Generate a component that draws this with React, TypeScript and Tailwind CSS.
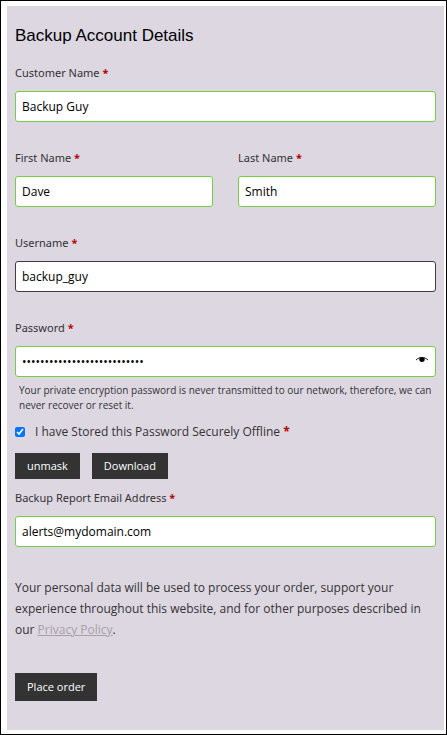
import { useState } from "react";
import type { ComponentProps } from "react";

type FieldProps = ComponentProps<"input"> & { id: string; label: string };

const Required = () => <span className="font-bold text-[#b30000]">*</span>;

function Field({ id, label, className = "border-[#75ce42]", children, ...props }: FieldProps) {
  return (
    <div className="min-w-0 flex-1">
      <label htmlFor={id} className="block font-['Noto_Sans',sans-serif] text-[11px] leading-4">
        {label} <Required />
      </label>
      <div className="relative mt-[10px]">
        <input
          id={id}
          className={`block h-[31px] w-full rounded-[3px] border bg-white px-[6px] text-[12px] text-black outline-none ${className}`}
          {...props}
        />
        {children}
      </div>
    </div>
  );
}

export default function App() {
  const [masked, setMasked] = useState(true);

  return (
    <div className="min-h-screen border border-black bg-white pt-[5px] pr-[2px] pb-[4px] pl-[6px] font-['Open_Sans',sans-serif] text-[#333333]">
      <form
        className="bg-[#ddd7e2] px-2 pt-[18px] pb-[29px]"
        onSubmit={(e) => e.preventDefault()}
      >
        <h3 className="font-['Liberation_Sans',Arial,sans-serif] text-[17px] leading-6 text-black">
          Backup Account Details
        </h3>

        {/* Account fields */}
        <div className="mt-[17px] flex flex-col gap-[28px]">
          <Field id="customer" label="Customer Name" defaultValue="Backup Guy" />
          <div className="flex gap-[25px]">
            <Field id="first" label="First Name" defaultValue="Dave" />
            <Field id="last" label="Last Name" defaultValue="Smith" />
          </div>
          <Field
            id="username"
            label="Username"
            defaultValue="backup_guy"
            className="border-[#4a363b]"
          />
          <Field
            id="password"
            label="Password"
            type={masked ? "password" : "text"}
            defaultValue="correct-horse-battery-stapl"
          >
            <button
              type="button"
              aria-label="Show password"
              className="absolute top-2 right-2 text-black"
              onClick={() => setMasked(!masked)}
            >
              <svg viewBox="0 0 12 12" className="block h-3 w-3">
                <path d="M0 6C2 4.1 4 3.5 6 3.5s4 .6 6 2.5" fill="none" stroke="currentColor" strokeWidth="0.9" />
                <ellipse cx="6" cy="5.6" rx="2.7" ry="2.4" fill="currentColor" />
              </svg>
            </button>
          </Field>
        </div>

        <p className="mt-[6px] px-1 text-[10px] leading-[15px]">
          Your private encryption password is never transmitted to our network, therefore, we can
          never recover or reset it.
        </p>

        <div className="mt-[11px] flex items-center gap-[10px]">
          <input
            id="stored"
            type="checkbox"
            defaultChecked
            className="h-[10px] w-[10px] accent-[#0075ff]"
          />
          <label htmlFor="stored" className="text-[12px] leading-4">
            I have Stored this Password Securely Offline <Required />
          </label>
        </div>

        <div className="mt-[13px] mb-[11px] flex gap-3">
          <button
            type="button"
            className="h-[26px] bg-[#333333] px-3 text-[11px] font-medium text-white"
            onClick={() => setMasked(!masked)}
          >
            unmask
          </button>
          <button type="button" className="h-[26px] bg-[#333333] px-3 text-[11px] font-medium text-white">
            Download
          </button>
        </div>

        <Field id="email" label="Backup Report Email Address" type="email" defaultValue="alerts@mydomain.com" />

        <p className="mt-[30px] text-[12px] leading-[21px]">
          Your personal data will be used to process your order, support your experience throughout
          this website, and for other purposes described in our{" "}
          <a href="#privacy" className="text-[#a6a1a8] underline">
            Privacy Policy
          </a>
          .
        </p>

        <button
          type="submit"
          className="mt-[33px] block h-[28px] bg-[#333333] px-3 text-[11px] font-medium text-white"
        >
          Place order
        </button>
      </form>
    </div>
  );
}
